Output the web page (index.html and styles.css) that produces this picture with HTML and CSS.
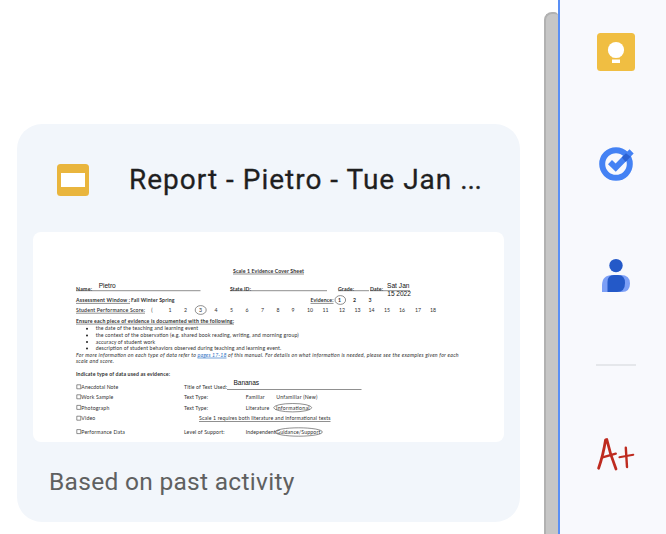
FILE: index.html
```html
<!DOCTYPE html>
<html lang="en">
<head>
<meta charset="utf-8">
<title>Suggested files</title>
<link rel="stylesheet" href="styles.css">
</head>
<body>
<main class="content">
  <article class="card">
    <header class="card-header">
      <svg class="slides-icon" viewBox="0 0 32 32"><rect width="32" height="32" rx="3.5" fill="#e9b53d"/><rect x="4" y="9" width="24" height="14" fill="#fff"/></svg>
      <h1 class="card-title">Report - Pietro - Tue Jan <span class="dots">...</span></h1>
    </header>
    <svg class="preview" viewBox="33 232 471 210">
      <g class="bold">
        <text x="233" y="273" textLength="71">Scale 1 Evidence Cover Sheet</text>
        <text x="76" y="290.5" textLength="16">Name:</text>
        <text x="230" y="290.5" textLength="21">State ID:</text>
        <text x="338" y="290.5" textLength="16">Grade:</text>
        <text x="370" y="290.5" textLength="13">Date:</text>
        <text x="76" y="302.3" textLength="54">Assessment Window :</text>
        <text x="131" y="302.3" textLength="43.5">Fall Winter Spring</text>
        <text x="310.5" y="302.3" textLength="23">Evidence:</text>
        <text x="338" y="302.3">1</text><text x="353" y="302.3">2</text><text x="368.5" y="302.3">3</text>
        <text x="76" y="323" textLength="158">Ensure each piece of evidence is documented with the following:</text>
        <text x="76" y="376" textLength="94">Indicate type of data used as evidence:</text>
      </g>
      <text x="76" y="312" textLength="69" class="semi">Student Performance Score:</text>
      <g class="middle">
        <text x="152" y="312">(</text><text x="170" y="312">1</text><text x="185.5" y="312">2</text><text x="200.5" y="312">3</text><text x="216" y="312">4</text><text x="231.5" y="312">5</text><text x="247" y="312">6</text><text x="262.5" y="312">7</text><text x="278" y="312">8</text><text x="293" y="312">9</text><text x="310" y="312">10</text><text x="325.5" y="312">11</text><text x="342" y="312">12</text><text x="357.5" y="312">13</text><text x="371.5" y="312">14</text><text x="387" y="312">15</text><text x="402" y="312">16</text><text x="418" y="312">17</text><text x="433" y="312">18</text>
      </g>
      <g fill="#222"><circle cx="87" cy="328.8" r="1"/><circle cx="87" cy="335.5" r="1"/><circle cx="87" cy="342" r="1"/><circle cx="87" cy="348.5" r="1"/></g>
      <text x="95.7" y="330.3" textLength="102.5">the date of the teaching and learning event</text>
      <text x="95.7" y="337" textLength="203">the context of the observation (e.g. shared book reading, writing, and morning group)</text>
      <text x="95.7" y="343.6" textLength="59.5">accuracy of student work</text>
      <text x="95.7" y="350.2" textLength="185.5">description of student behaviors observed during teaching and learning event.</text>
      <g class="italic">
        <text x="76" y="357" textLength="120">For more information on each type of data refer to</text>
        <text x="197.5" y="357" textLength="29" class="link">pages 17-18</text>
        <text x="228" y="357" textLength="230.5">of this manual. For details on what information is needed, please see the examples given for each</text>
        <text x="76" y="363" textLength="38">scale and score.</text>
      </g>
      <text x="81.3" y="389" textLength="37">Anecdotal Note</text>
      <text x="81.3" y="399" textLength="32">Work Sample</text>
      <text x="81.3" y="409.6" textLength="28">Photograph</text>
      <text x="81.3" y="420.4" textLength="14">Video</text>
      <text x="81.3" y="433.8" textLength="43.5">Performance Data</text>
      <text x="184" y="389" textLength="43">Title of Text Used:</text>
      <text x="184" y="399" textLength="24">Text Type:</text>
      <text x="184" y="409.6" textLength="24">Text Type:</text>
      <text x="184" y="433.8" textLength="40.5">Level of Support:</text>
      <text x="245.7" y="399" textLength="19">Familiar</text>
      <text x="276.3" y="399" textLength="41">Unfamiliar (New)</text>
      <text x="245.7" y="409.6" textLength="23.5">Literature</text>
      <text x="276" y="409.6" textLength="33.5">Informational</text>
      <text x="199" y="420.4" textLength="131.5">Scale 1 requires both literature and informational texts</text>
      <text x="245.7" y="433.8" textLength="30">Independent</text>
      <text x="276.3" y="433.8" textLength="44">Guidance/Support</text>
      <g class="entry">
        <text x="98.7" y="288" textLength="17">Pietro</text>
        <text x="387" y="288" textLength="22.5">Sat Jan</text>
        <text x="387.3" y="296" textLength="23.5">15 2022</text>
        <text x="233.5" y="385.4" textLength="25.5">Bananas</text>
      </g>
      <g class="rules">
        <path d="M76 290.7H200.5M230 290.7H327M338 290.7H369M370 290.7H410M227 389.5H361.5"/>
        <path d="M233 274H304M76 303.4H130M310.5 303.4H333.5M76 313.2H145M76 324.1H234M199 421.5H330.5"/>
        <path d="M76.8 384.8h4v4h-4zM76.8 394.8h4v4h-4zM76.8 405.4h4v4h-4zM76.8 416.2h4v4h-4zM76.8 429.6h4v4h-4z"/>
        <ellipse cx="340.3" cy="300" rx="5.3" ry="4.4"/><ellipse cx="200.7" cy="310" rx="5.5" ry="4.4"/>
        <ellipse cx="292.7" cy="407.7" rx="19" ry="4.2"/><ellipse cx="298.7" cy="432" rx="23.7" ry="4.2"/>
      </g>
      <path d="M197.5 358H226.5" stroke="#3a7bc8" stroke-width=".7"/>
    </svg>
    <p class="caption">Based on past activity</p>
  </article>
</main>
<div class="scroll-track"><div class="scroll-thumb"></div></div>
<aside class="side-panel">
  <svg class="icon keep" viewBox="0 0 40 40"><rect x="1" y="1" width="38" height="38" rx="3.5" fill="#f0be42"/><circle cx="20" cy="18" r="8.1" fill="#fff"/><path d="M16 22h8v3.2h-8zM16 27.5h8v3.4h-8z" fill="#fff"/></svg>
  <svg class="icon tasks" viewBox="0 0 40 40"><circle cx="20" cy="20" r="13.8" fill="none" stroke="#4482f4" stroke-width="6"/><path d="M14 18.2L19.7 23.6L35.6 7.4" fill="none" stroke="#4482f4" stroke-width="5.8"/><path d="M27.4 11.7L30 9.2Q33.4 11.8 34.6 12.7L31.5 15.8Q30.4 13.5 27.4 11.7zM27.4 11.7Q30.4 13.5 31.8 16L29.5 17.8L25.8 13.5z" fill="#2c62d2"/></svg>
  <svg class="icon contacts" viewBox="0 0 40 40"><circle cx="20" cy="9.6" r="6.7" fill="#2459c8"/><path d="M6 36V29.5Q6 19 16.5 19H25Q34 19 34 27.5Q34 36 26 36Z" fill="#7c9ff6"/><path d="M11.5 36V26Q11.5 19 18 19H22Q29 19 29 27Q29 36 21 36Z" fill="#2459c8"/></svg>
  <hr class="divider">
  <svg class="icon grade" viewBox="0 0 40 40" fill="none" stroke="#be2b20" stroke-linecap="round" stroke-linejoin="round"><path d="M2.6 33.2Q7 21 9.6 4.8L10.8 4.5Q14 19 20 34" stroke-width="2.8"/><path d="M6.5 22.3L19.8 18.6" stroke-width="2.3"/><path d="M29.8 12.6L31 32" stroke-width="2.4"/><path d="M23.4 22.3L37.3 19.7" stroke-width="2"/></svg>
</aside>
</body>
</html>
```

FILE: styles.css
```css
* { box-sizing: border-box; }

body {
  display: flex;
  height: 534px;
  margin: 0;
  overflow: hidden;
  background: #fff;
  font-family: Roboto, sans-serif;
}

.content {
  flex: 0 0 544px;
  padding: 124px 24px 0 17px;
}

.card {
  height: 398px;
  padding: 0 16px;
  border-radius: 25px;
  background: #f2f6fb;
}

.card-header {
  display: flex;
  align-items: center;
  gap: 40px;
  height: 108px;
  padding: 4px 0 0 24px;
}

.slides-icon { width: 32px; height: 32px; }

.card-title {
  margin: 0;
  color: #1f1f1f;
  font-size: 28px;
  font-weight: 400;
  letter-spacing: 1px;
  line-height: 36px;
  white-space: nowrap;
  -webkit-text-stroke: 0.3px #1f1f1f;
}

.dots { letter-spacing: -0.2px; }

.preview {
  display: block;
  width: 471px;
  height: 210px;
  border-radius: 8px;
  background: #fff;
  font-family: Lato, sans-serif;
  font-size: 5.2px;
  fill: #303030;
}

.bold { font-weight: 700; }
.semi { font-weight: 600; }
.italic { font-style: italic; }
.middle { text-anchor: middle; }
.link { fill: #2f72c4; }
.entry { font-family: "Liberation Sans", sans-serif; font-size: 6.6px; fill: #111; }
.rules { fill: none; stroke: #444; stroke-width: 0.6; }

.caption {
  margin: 24px 0 0 16px;
  color: #5f6060;
  font-size: 24.5px;
  letter-spacing: 0.3px;
  line-height: 32px;
  white-space: nowrap;
}

.scroll-track {
  flex: 0 0 14px;
  padding-top: 12px;
}

.scroll-thumb {
  height: 522px;
  border: solid #b1b1b1;
  border-width: 2px 0 0 2px;
  border-radius: 8px 4px 0 0;
  background: #c6c6c6;
}

.side-panel {
  display: flex;
  flex: 1;
  flex-direction: column;
  padding: 32px 0 0 36px;
  border-left: 2px solid #598ff5;
  background: #f8f9fd;
}

.icon { flex: none; width: 40px; height: 40px; }
.tasks, .contacts { margin-top: 72px; }

.divider {
  width: 40px;
  height: 2px;
  margin: 68px 0 69px;
  border: 0;
  background: #e5e7eb;
}
```
